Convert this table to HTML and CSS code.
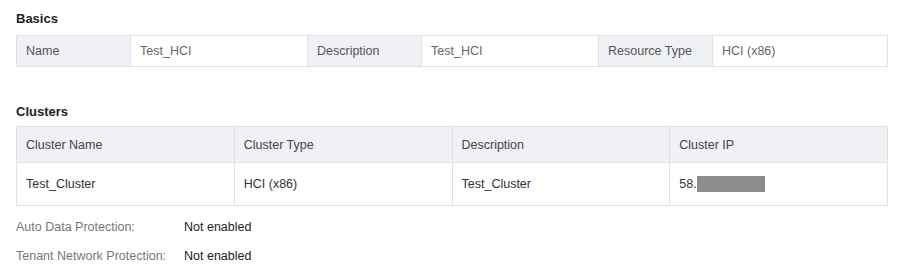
FILE: index.html
```html
<!DOCTYPE html>
<html lang="en">
<head>
  <meta charset="UTF-8" />
  <meta name="viewport" content="width=device-width, initial-scale=1.0" />
  <title>HCI Details</title>
  <link rel="stylesheet" href="styles.css">
</head>
<body>
  <div class="page">
    <h3 class="section-title">Basics</h3>
    <div class="basics">
      <div class="label">Name</div>
      <div class="value">Test_HCI</div>
      <div class="label">Description</div>
      <div class="value">Test_HCI</div>
      <div class="label">Resource Type</div>
      <div class="value">HCI (x86)</div>
    </div>

    <h3 class="section-title clusters-title">Clusters</h3>
    <table class="clusters">
      <thead>
        <tr>
          <th>Cluster Name</th>
          <th>Cluster Type</th>
          <th>Description</th>
          <th>Cluster IP</th>
        </tr>
      </thead>
      <tbody>
        <tr>
          <td>Test_Cluster</td>
          <td>HCI (x86)</td>
          <td>Test_Cluster</td>
          <td>58.<span class="masked"></span></td>
        </tr>
      </tbody>
    </table>

    <div class="info">
      <div class="info-row">
        <span class="info-label">Auto Data Protection:</span>
        <span class="info-value">Not enabled</span>
      </div>
      <div class="info-row">
        <span class="info-label">Tenant Network Protection:</span>
        <span class="info-value">Not enabled</span>
      </div>
    </div>
  </div>
</body>
</html>
```

FILE: styles.css
```css
* {
  margin: 0;
  padding: 0;
  box-sizing: border-box;
}
body {
  background: #fff;
  font-family: 'Liberation Sans', Arial, sans-serif;
  font-size: 12.5px;
  color: #333;
}
.page {
  padding: 11px 12px 0 16px;
}
.section-title {
  font-size: 13px;
  font-weight: bold;
  color: #222;
  line-height: 16px;
  margin-bottom: 8px;
}
.clusters-title {
  margin-top: 37px;
  margin-bottom: 6px;
}
.basics {
  display: grid;
  grid-template-columns: 114px 176px 115px 176px 115px 176px;
  border: 1px solid #dfe1e6;
  width: 872px;
}
.basics > div {
  height: 30px;
  line-height: 30px;
  padding-left: 9px;
  color: #555;
}
.basics .label {
  background: #f0f1f5;
  border-left: 1px solid #dfe1e6;
  border-right: 1px solid #dfe1e6;
}
.basics .label:first-child {
  border-left: none;
}
.basics .value {
  padding-left: 9px;
  color: #666;
}
.clusters {
  width: 872px;
  border-collapse: collapse;
  table-layout: fixed;
}
.clusters th,
.clusters td {
  border: 1px solid #dfe1e6;
  text-align: left;
  padding: 0 9px;
  font-weight: normal;
}
.clusters th {
  background: #f0f1f5;
  height: 36px;
  color: #444;
}
.clusters td {
  height: 43px;
  color: #333;
}
.masked {
  display: inline-block;
  width: 68px;
  height: 16px;
  background: #8c8c8c;
  vertical-align: -4px;
}
.info {
  margin-top: 6px;
}
.info-row {
  display: flex;
  height: 29px;
  align-items: center;
}
.info-label {
  width: 168px;
  color: #777;
}
.info-value {
  color: #222;
}
```
